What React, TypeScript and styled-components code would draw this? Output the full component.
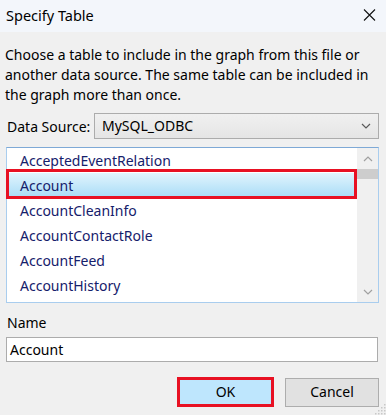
import React from "react";
import styled, { createGlobalStyle } from "styled-components";

const Global = createGlobalStyle`
  html, body { margin: 0; padding: 0; background: #f0f0f0; }
  body { font-family: "Noto Sans", "Open Sans", sans-serif; }
`;

const UI_FONT = `"Noto Sans", "Open Sans", sans-serif`;

const Window = styled.div`
  width: 386px;
  height: 415px;
  background: #f0f0f0;
  display: flex;
  flex-direction: column;
  position: relative;
  overflow: hidden;
  font-family: ${UI_FONT};
  font-size: 14px;
  color: #000;
`;

const TitleBar = styled.div`
  height: 32px;
  flex: none;
  background: #f3f6fb;
  display: flex;
  align-items: center;
  justify-content: space-between;
  padding: 0 10px 0 6px;
  box-sizing: border-box;
`;

const Title = styled.span`
  font-size: 14.5px;
  margin-top: -2px;
`;

const CloseIcon = styled.svg`
  width: 13px;
  height: 12px;
  display: block;
  margin-top: -2px;
`;

const Body = styled.div`
  display: flex;
  flex-direction: column;
  padding: 13px 7px 0 6px;
`;

const Description = styled.p`
  margin: 0 0 0 -1px;
  line-height: 20px;
  white-space: nowrap;
`;

const SourceRow = styled.div`
  margin-top: 8px;
  height: 26px;
  display: flex;
  align-items: center;
`;

const SourceLabel = styled.span`
  width: 88px;
  flex: none;
  padding-left: 1px;
  box-sizing: border-box;
`;

const Combo = styled.div`
  flex: 1;
  height: 26px;
  box-sizing: border-box;
  border: 1px solid #acacac;
  background: linear-gradient(#f0f0f0, #e5e5e5);
  display: flex;
  align-items: center;
  justify-content: space-between;
  padding: 0 7px 0 7px;
`;

const ComboText = styled.span`
  margin-top: -1px;
`;

const ListBox = styled.div`
  margin-top: 8px;
  height: 156px;
  box-sizing: border-box;
  border: 1px solid #a9cdee;
  border-top-color: #7ea9d6;
  background: #fff;
  display: flex;
  position: relative;
`;

const Items = styled.div`
  flex: 1;
  display: flex;
  flex-direction: column;
  overflow: hidden;
`;

const Item = styled.div<{ $selected?: boolean }>`
  height: 25px;
  flex: none;
  display: flex;
  align-items: center;
  padding-left: 13px;
  color: #15206b;
  box-sizing: border-box;
  background: ${(p) =>
    p.$selected ? "linear-gradient(#e2f4fd, #c4e8fa 50%, #a8dbf6)" : "transparent"};
`;

const ScrollBar = styled.div`
  width: 21px;
  flex: none;
  background: #f0f0f0;
  display: flex;
  flex-direction: column;
  align-items: center;
`;

const ArrowBox = styled.div`
  height: 21px;
  width: 21px;
  display: flex;
  align-items: center;
  justify-content: center;
`;

const Thumb = styled.div`
  width: 21px;
  height: 10px;
  background: #cdcdcd;
`;

const Track = styled.div`
  flex: 1;
`;

const Highlight = styled.div`
  position: absolute;
  left: -1px;
  top: 21px;
  width: 351px;
  height: 30px;
  box-sizing: border-box;
  border: 3px solid #e81123;
  pointer-events: none;
`;

const NameLabel = styled.div`
  margin-top: 10px;
  line-height: 20px;
  padding-left: 1px;
`;

const NameInput = styled.div`
  margin-top: 4px;
  height: 25px;
  margin-right: 1px;
  box-sizing: border-box;
  border: 1px solid #acacac;
  background: #fff;
  display: flex;
  align-items: center;
  padding-left: 3px;
`;

const ButtonRow = styled.div`
  margin-top: 15px;
  display: flex;
  justify-content: flex-end;
  align-items: flex-start;
  gap: 11px;
`;

const Button = styled.button<{ $primary?: boolean }>`
  font-family: ${UI_FONT};
  font-size: 14px;
  color: #000;
  margin: 0;
  padding: 0 0 2px;
  box-sizing: border-box;
  width: ${(p) => (p.$primary ? "97px" : "94px")};
  height: ${(p) => (p.$primary ? "30px" : "29px")};
  margin-top: ${(p) => (p.$primary ? "0" : "1px")};
  border: ${(p) => (p.$primary ? "3px solid #e81123" : "1px solid #adadad")};
  background: ${(p) => (p.$primary ? "#bee6fd" : "#e1e1e1")};
`;

const Grip = styled.svg`
  position: absolute;
  right: 0;
  bottom: 0;
  width: 12px;
  height: 12px;
`;

const Chevron = ({ up, color = "#606060" }: { up?: boolean; color?: string }) => (
  <svg width="10" height="6" viewBox="0 0 10 6">
    <path
      d={up ? "M1 5 L5 1 L9 5" : "M1 1 L5 5 L9 1"}
      fill="none"
      stroke={color}
      strokeWidth="1.2"
    />
  </svg>
);

const items = [
  "AcceptedEventRelation",
  "Account",
  "AccountCleanInfo",
  "AccountContactRole",
  "AccountFeed",
  "AccountHistory",
];

export default function App() {
  const grip: [number, number][] = [];
  for (let r = 0; r < 4; r++) {
    for (let c = 0; c < 4; c++) {
      if (r + c >= 3) grip.push([c * 3 + 1, r * 3 + 1]);
    }
  }
  return (
    <>
      <Global />
      <Window>
        <TitleBar>
          <Title>Specify Table</Title>
          <CloseIcon viewBox="0 0 13 12">
            <path d="M1 0.5 L12 11.5 M12 0.5 L1 11.5" stroke="#111" strokeWidth="1.1" />
          </CloseIcon>
        </TitleBar>
        <Body>
          <Description>
            Choose a table to include in the graph from this file or
            <br />
            another data source. The same table can be included in
            <br />
            the graph more than once.
          </Description>
          <SourceRow>
            <SourceLabel>Data Source:</SourceLabel>
            <Combo>
              <ComboText>MySQL_ODBC</ComboText>
              <Chevron color="#5a5a5a" />
            </Combo>
          </SourceRow>
          <ListBox>
            <Items>
              {items.map((it) => (
                <Item key={it} $selected={it === "Account"}>
                  {it}
                </Item>
              ))}
            </Items>
            <ScrollBar>
              <ArrowBox>
                <Chevron up color="#a0a0a0" />
              </ArrowBox>
              <Thumb />
              <Track />
              <ArrowBox>
                <Chevron color="#a0a0a0" />
              </ArrowBox>
            </ScrollBar>
            <Highlight />
          </ListBox>
          <NameLabel>Name</NameLabel>
          <NameInput>Account</NameInput>
          <ButtonRow>
            <Button $primary>OK</Button>
            <Button>Cancel</Button>
          </ButtonRow>
        </Body>
        <Grip viewBox="0 0 12 12">
          {grip.map(([x, y], i) => (
            <rect key={i} x={x} y={y} width="1.5" height="1.5" fill="#c8c8c8" />
          ))}
        </Grip>
      </Window>
    </>
  );
}
